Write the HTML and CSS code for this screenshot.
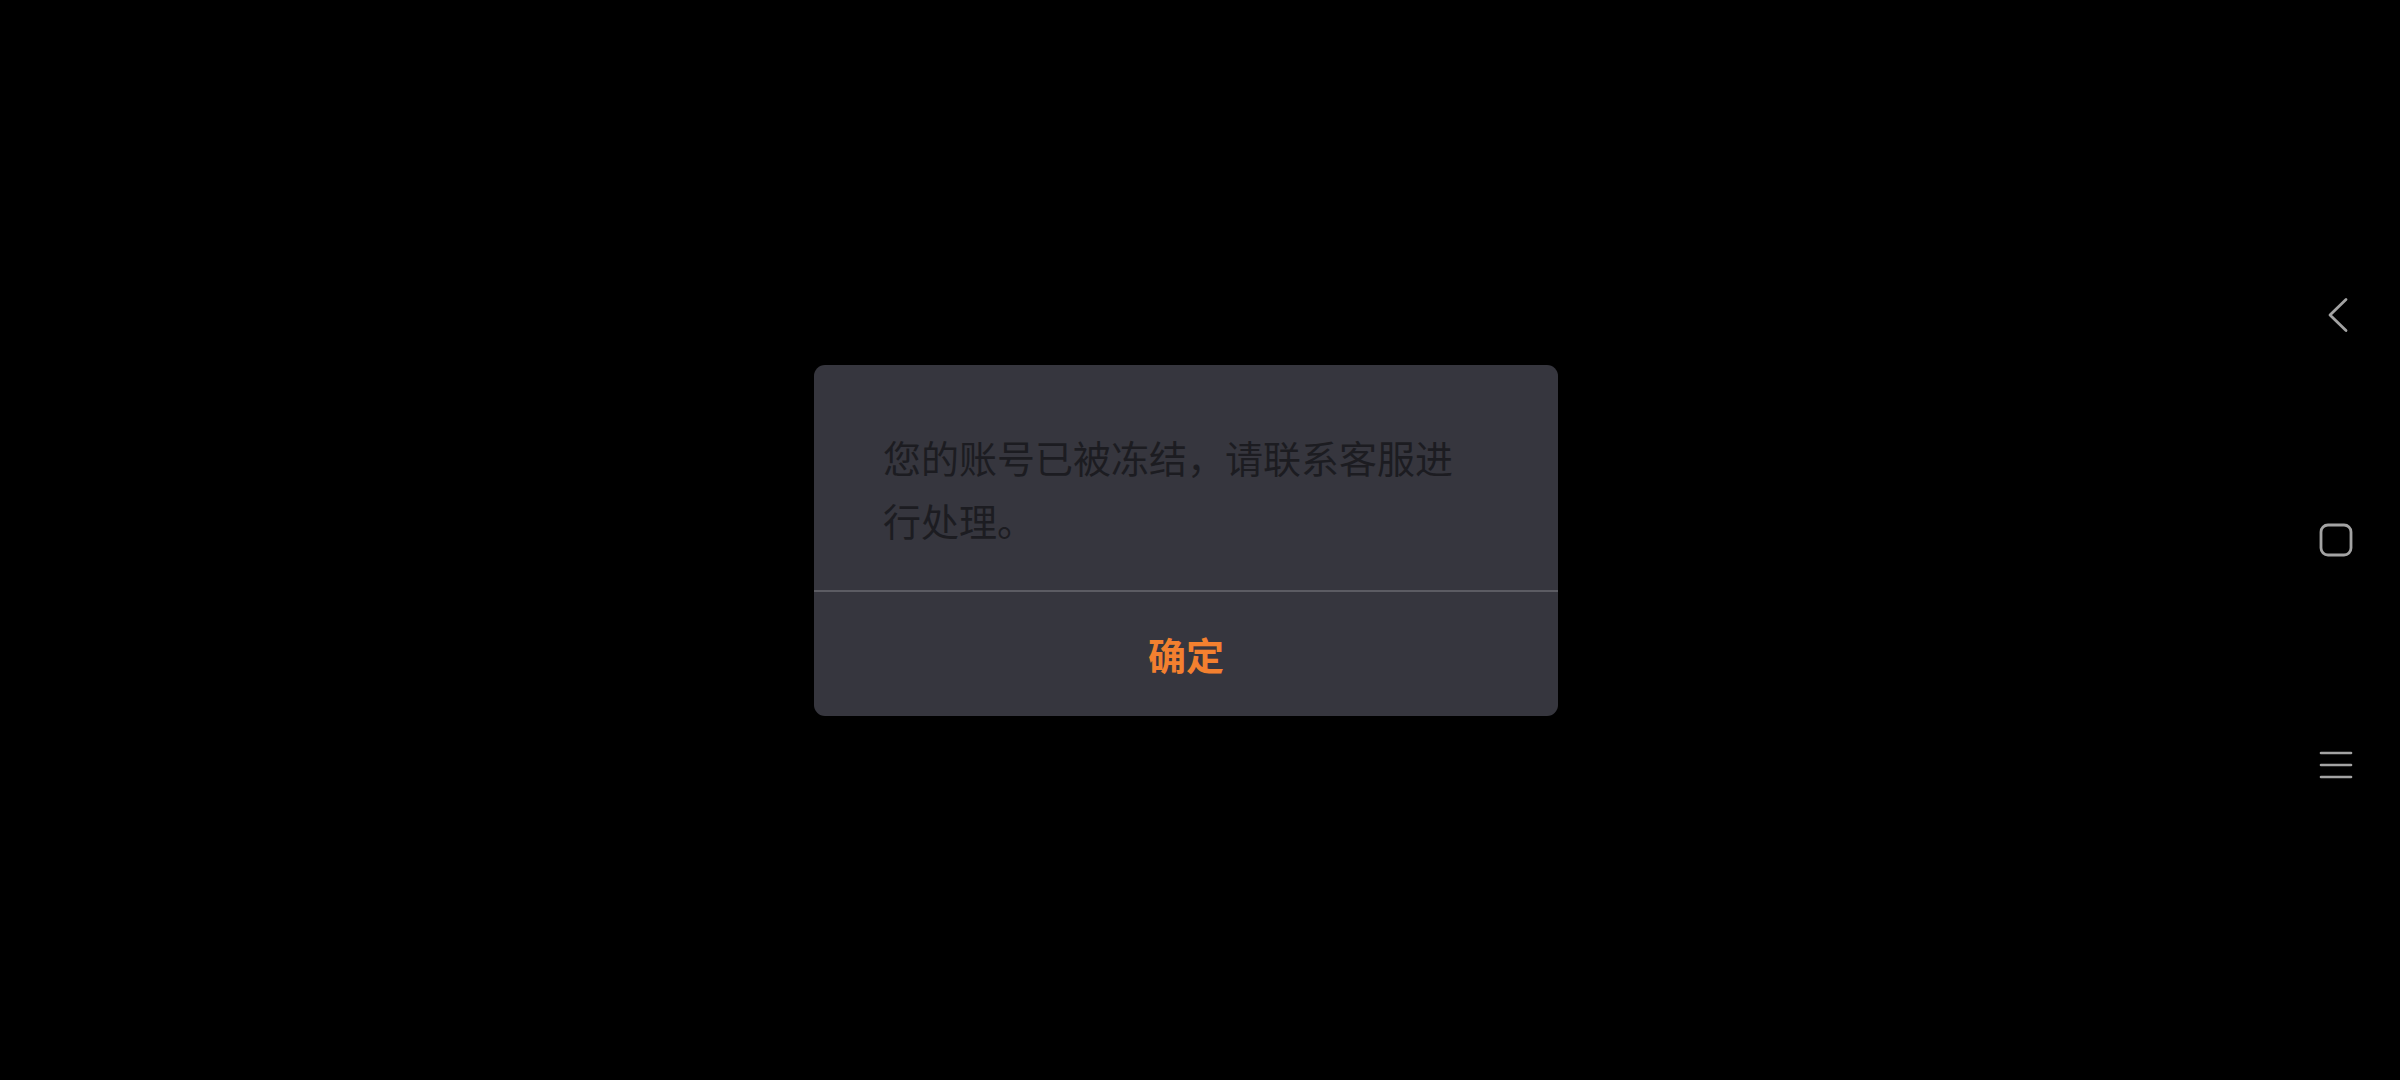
FILE: index.html
```html
<!DOCTYPE html>
<html lang="zh-CN">
<head>
<meta charset="utf-8">
<title>提示</title>
<link rel="stylesheet" href="styles.css">
</head>
<body>
<div class="screen">
  <main class="content">
    <div class="dialog">
      <div class="dialog-body">
        <p class="message">您的账号已被冻结，请联系客服进行处理。</p>
      </div>
      <div class="dialog-actions">
        <button class="confirm">确定</button>
      </div>
    </div>
  </main>
  <nav class="navbar">
    <svg class="nav-icon back" width="40" height="40" viewBox="0 0 40 40">
      <polyline points="28,4.5 12,20 28,35.5" fill="none" stroke="#a3a3a3" stroke-width="2.8" stroke-linecap="round" stroke-linejoin="round"/>
    </svg>
    <svg class="nav-icon home" width="40" height="40" viewBox="0 0 40 40">
      <rect x="5" y="5" width="30" height="30" rx="7" ry="7" fill="none" stroke="#a3a3a3" stroke-width="2.8"/>
    </svg>
    <svg class="nav-icon menu" width="40" height="40" viewBox="0 0 40 40">
      <line x1="5" y1="8" x2="35" y2="8" stroke="#a3a3a3" stroke-width="2.6" stroke-linecap="round"/>
      <line x1="5" y1="20" x2="35" y2="20" stroke="#a3a3a3" stroke-width="2.6" stroke-linecap="round"/>
      <line x1="5" y1="32" x2="35" y2="32" stroke="#a3a3a3" stroke-width="2.6" stroke-linecap="round"/>
    </svg>
  </nav>
</div>
</body>
</html>
```

FILE: styles.css
```css
html, body {
  margin: 0;
  padding: 0;
  background: #000;
  width: 2400px;
  height: 1080px;
  overflow: hidden;
  font-family: "Noto Sans CJK SC", "Noto Sans", sans-serif;
}

.screen {
  display: flex;
  width: 2400px;
  height: 1080px;
}

.content {
  flex: 1;
  display: flex;
  align-items: center;
  justify-content: center;
  padding-left: 100px;
}

.dialog {
  width: 744px;
  background: #36363e;
  border-radius: 11px;
  overflow: hidden;
}

.dialog-body {
  padding: 60px 69px 39px 69px;
  border-bottom: 2px solid #5c5c63;
}

.message {
  margin: 0;
  font-size: 38px;
  line-height: 63px;
  color: #1c1c21;
}

.dialog-actions {
  height: 124px;
  display: flex;
  align-items: center;
  justify-content: center;
}

.confirm {
  background: none;
  border: none;
  padding: 0;
  font-family: "Noto Sans CJK SC", "Noto Sans", sans-serif;
  font-size: 38px;
  font-weight: 700;
  color: #f3802f;
  line-height: 1;
}

.navbar {
  width: 128px;
  display: flex;
  flex-direction: column;
  align-items: center;
  justify-content: center;
  gap: 185px;
}

.nav-icon {
  display: block;
}

.back {
  margin-left: 4px;
}
```
